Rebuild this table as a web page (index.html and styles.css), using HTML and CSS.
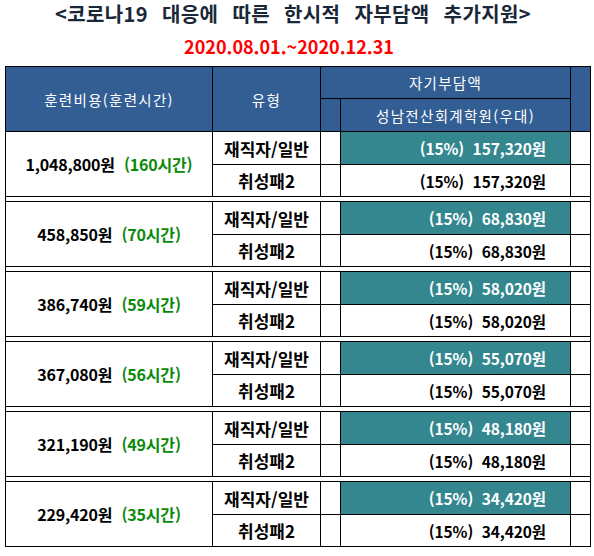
FILE: index.html
```html
<!DOCTYPE html>
<html lang="ko">
<head>
<meta charset="utf-8">
<link rel="stylesheet" href="styles.css">
</head>
<body>
<div class="titles">
  <h1 class="title">&lt;코로나19 대응에 따른 한시적 자부담액 추가지원&gt;</h1>
  <p class="period">2020.08.01.~2020.12.31</p>
</div>
<div class="sheet">
  <div class="head">
    <div class="h-cost">훈련비용(훈련시간)</div>
    <div class="h-type">유형</div>
    <div class="h-self">자기부담액</div>
    <div class="h-end"></div>
    <div class="h-blank"></div>
    <div class="h-school">성남전산회계학원(우대)</div>
  </div>

  <div class="group">
    <div class="amount">1,048,800원&nbsp; <span class="hours">(160시간)</span></div>
    <div class="type">재직자/일반</div><div class="blank"></div><div class="val teal">(15%)&nbsp; 157,320원</div><div class="blank"></div>
    <div class="type">취성패2</div><div class="blank"></div><div class="val">(15%)&nbsp; 157,320원</div><div class="blank"></div>
  </div>

  <div class="group">
    <div class="amount">458,850원&nbsp; <span class="hours">(70시간)</span></div>
    <div class="type">재직자/일반</div><div class="blank"></div><div class="val teal">(15%)&nbsp; 68,830원</div><div class="blank"></div>
    <div class="type">취성패2</div><div class="blank"></div><div class="val">(15%)&nbsp; 68,830원</div><div class="blank"></div>
  </div>

  <div class="group">
    <div class="amount">386,740원&nbsp; <span class="hours">(59시간)</span></div>
    <div class="type">재직자/일반</div><div class="blank"></div><div class="val teal">(15%)&nbsp; 58,020원</div><div class="blank"></div>
    <div class="type">취성패2</div><div class="blank"></div><div class="val">(15%)&nbsp; 58,020원</div><div class="blank"></div>
  </div>

  <div class="group">
    <div class="amount">367,080원&nbsp; <span class="hours">(56시간)</span></div>
    <div class="type">재직자/일반</div><div class="blank"></div><div class="val teal">(15%)&nbsp; 55,070원</div><div class="blank"></div>
    <div class="type">취성패2</div><div class="blank"></div><div class="val">(15%)&nbsp; 55,070원</div><div class="blank"></div>
  </div>

  <div class="group">
    <div class="amount">321,190원&nbsp; <span class="hours">(49시간)</span></div>
    <div class="type">재직자/일반</div><div class="blank"></div><div class="val teal">(15%)&nbsp; 48,180원</div><div class="blank"></div>
    <div class="type">취성패2</div><div class="blank"></div><div class="val">(15%)&nbsp; 48,180원</div><div class="blank"></div>
  </div>

  <div class="group">
    <div class="amount">229,420원&nbsp; <span class="hours">(35시간)</span></div>
    <div class="type">재직자/일반</div><div class="blank"></div><div class="val teal">(15%)&nbsp; 34,420원</div><div class="blank"></div>
    <div class="type">취성패2</div><div class="blank"></div><div class="val">(15%)&nbsp; 34,420원</div><div class="blank"></div>
  </div>
</div>
</body>
</html>
```
FILE: styles.css
```css
* { box-sizing: border-box; }
html, body { margin: 0; padding: 0; background: #fff; }
body {
  font-family: "Noto Sans CJK KR", "Noto Sans", sans-serif;
  width: 594px;
  height: 556px;
  overflow: hidden;
}
.titles {
  height: 66px;
  display: flex;
  flex-direction: column;
  align-items: center;
}
.title {
  margin: 0;
  padding-top: 1px;
  padding-right: 8px;
  font-size: 20px;
  line-height: 26px;
  font-weight: bold;
  color: #1a2738;
  word-spacing: 8px;
  letter-spacing: 0.4px;
}
.period {
  margin: 0;
  padding-top: 7px;
  padding-right: 16px;
  font-size: 18px;
  line-height: 24px;
  font-weight: bold;
  color: #ff0000;
  letter-spacing: 0;
}
.sheet {
  margin-left: 5px;
  width: 586px;
  border-left: 1px solid #000;
  border-right: 1px solid #000;
  border-bottom: 1px solid #000;
}
.head, .group {
  display: grid;
  grid-template-columns: 206px 107px 19px 229px 19px;
  gap: 1px;
  background: #000;
  border-top: 1px solid #000;
}
.head {
  grid-template-rows: 31px 32px;
  color: #fff;
  font-size: 14.5px;
  letter-spacing: 1.3px;
}
.head > div {
  background: #325e94;
  display: flex;
  align-items: center;
  justify-content: center;
}
.h-cost { grid-row: 1 / 3; grid-column: 1; }
.h-type { grid-row: 1 / 3; grid-column: 2; }
.h-self { grid-row: 1; grid-column: 3 / 5; }
.h-end { grid-row: 1 / 3; grid-column: 5; }
.h-blank { grid-row: 2; grid-column: 3; }
.h-school { grid-row: 2; grid-column: 4; padding-top: 1px; }

.group {
  grid-template-rows: 32px 31px;
  font-weight: bold;
  font-size: 15.5px;
  color: #000;
}
.group > div {
  background: #fff;
  display: flex;
  align-items: center;
}
.group:not(:last-child) { border-bottom: 1px solid #000; }
.group + .group { margin-top: 4px; }
.amount {
  grid-row: 1 / 3;
  grid-column: 1;
  justify-content: center;
  font-size: 16px;
  letter-spacing: -0.2px;
}
.hours { color: #0a8a0a; margin-left: 5px; }
.type {
  justify-content: center;
  font-size: 17px;
}
.val {
  justify-content: flex-end;
  padding-right: 24px;
  letter-spacing: -0.1px;
}
.group > .teal {
  background: #34878f;
  color: #fff;
}
```
